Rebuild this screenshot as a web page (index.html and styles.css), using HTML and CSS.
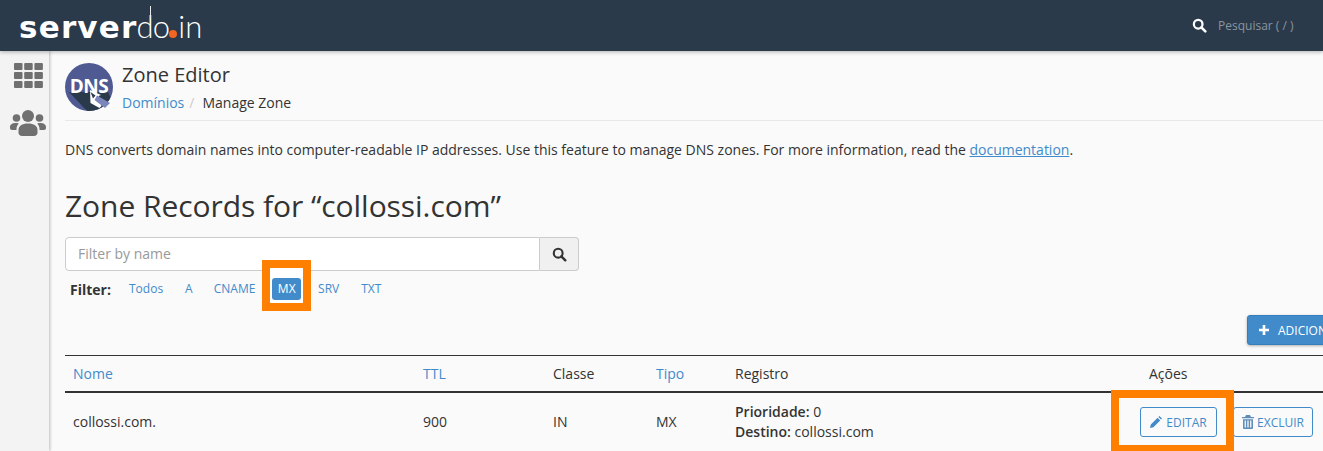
FILE: index.html
```html
<!DOCTYPE html>
<html lang="pt">
<head>
<meta charset="utf-8">
<title>Zone Editor</title>
<link rel="stylesheet" href="styles.css">
</head>
<body>
<header class="topbar">
  <div class="logo"><span class="logo-bold">server</span><span class="logo-thin"><span class="logo-d">do</span><i class="logo-dot"></i>in</span></div>
  <div class="search">
    <svg class="search-icon" viewBox="0 0 16 16"><circle cx="6.600" cy="6.600" r="4.600" fill="none" stroke="#fff" stroke-width="2.400"/><path d="M10 10l4.200 4.200" stroke="#fff" stroke-width="2.800" stroke-linecap="round"/></svg>
    <span>Pesquisar ( / )</span>
  </div>
</header>
<div class="shell">
  <aside class="sidebar">
    <svg class="side-grid" viewBox="0 0 29 25" fill="#707070">
      <rect x="0" y="0" width="8.500" height="7" rx="1"/><rect x="10.200" y="0" width="8.500" height="7" rx="1"/><rect x="20.400" y="0" width="8.500" height="7" rx="1"/>
      <rect x="0" y="9" width="8.500" height="7" rx="1"/><rect x="10.200" y="9" width="8.500" height="7" rx="1"/><rect x="20.400" y="9" width="8.500" height="7" rx="1"/>
      <rect x="0" y="18" width="8.500" height="7" rx="1"/><rect x="10.200" y="18" width="8.500" height="7" rx="1"/><rect x="20.400" y="18" width="8.500" height="7" rx="1"/>
    </svg>
    <svg class="side-users" viewBox="0 0 36 26" fill="#707070">
      <circle cx="18" cy="6" r="6"/><circle cx="6.500" cy="8" r="3.800"/><circle cx="29.500" cy="8" r="3.800"/>
      <path d="M8.500 22.500c0 2 1.500 3.500 3.500 3.500h12c2 0 3.500-1.500 3.500-3.500V20c0-4-3.500-6.500-9.500-6.500s-9.500 2.500-9.500 6.500z"/>
      <path d="M6.500 20H2c-1.200 0-2-.8-2-2v-1c0-2.500 2.500-4 6-4 1 0 2 .2 2.700.4C7.300 15 6.500 17 6.500 19z"/>
      <path d="M29.500 20H34c1.200 0 2-.8 2-2v-1c0-2.500-2.500-4-6-4-1 0-2 .2-2.700.4C28.700 15 29.500 17 29.500 19z"/>
    </svg>
  </aside>
  <main class="content">
    <div class="page-head">
      <svg class="dns-icon" viewBox="0 0 48 48">
        <defs><clipPath id="dc"><circle cx="24" cy="24" r="24"/></clipPath></defs>
        <circle cx="24" cy="24" r="24" fill="#4f5a93"/>
        <g clip-path="url(#dc)">
          <path d="M4 29H43l5 11-10 8H22z" fill="#2b3a4b"/>
        </g>
        <text x="24" y="29.500" class="dns-text">DNS</text>
        <path d="M25 27l11 5-2.500 1 3 10-2 2-9-5z" fill="#fff"/>
        <path d="M32 32.500l13 7.500-5 5-10.500-8z" fill="#7c86bd"/>
        <path d="M25.500 29l5 3.500-2.500 3z" fill="#2b3a4b"/>
      </svg>
      <div class="head-text">
        <h1>Zone Editor</h1>
        <nav class="crumbs"><a>Domínios</a><span class="sep">/</span><span class="cur">Manage Zone</span></nav>
      </div>
    </div>
    <p class="intro">DNS converts domain names into computer-readable IP addresses. Use this feature to manage DNS zones. For more information, read the <a>documentation</a>.</p>
    <h2>Zone Records for “collossi.com”</h2>
    <div class="search-group">
      <div class="filter-input">Filter by name</div>
      <button class="search-btn"><svg viewBox="0 0 16 16"><circle cx="6.600" cy="6.600" r="4.700" fill="none" stroke="#333" stroke-width="2.200"/><path d="M10 10l4.200 4.200" stroke="#333" stroke-width="2.600" stroke-linecap="round"/></svg></button>
    </div>
    <div class="filters">
      <strong>Filter:</strong>
      <a class="f f-todos">Todos</a><a class="f f-a">A</a><a class="f">CNAME</a><span class="active-wrap"><span class="mark mark-mx"></span><a class="f active">MX</a></span><a class="f f-srv">SRV</a><a class="f">TXT</a>
    </div>
    <div class="add-row"><button class="add-btn"><svg viewBox="0 0 12 12"><path d="M6 1v10M1 6h10" stroke="#fff" stroke-width="2.600"/></svg>ADICIONAR REGISTRO</button></div>
    <div class="table">
      <div class="row thead">
        <div class="c c-name"><a>Nome</a></div>
        <div class="c c-ttl"><a>TTL</a></div>
        <div class="c c-class">Classe</div>
        <div class="c c-type"><a>Tipo</a></div>
        <div class="c c-rec">Registro</div>
        <div class="c c-act-h">Ações</div>
      </div>
      <div class="row tbody">
        <div class="c c-name single">collossi.com.</div>
        <div class="c c-ttl single">900</div>
        <div class="c c-class single">IN</div>
        <div class="c c-type single">MX</div>
        <div class="c c-rec"><div><b>Prioridade:</b> 0</div><div><b>Destino:</b> collossi.com</div></div>
        <div class="c c-act">
          <button class="act edit"><svg viewBox="0 0 12 12"><path d="M0 12l.8-3.400L7.600 1.800l2.600 2.600-6.800 6.800zM8.400 1l1-1 2.600 2.600-1 1z" fill="#428bca"/></svg>EDITAR<span class="mark mark-edit"></span></button>
          <button class="act del"><svg class="trash" viewBox="0 0 12 14"><path d="M4 0h4l1 2h3v1.200H0V2h3zM1 4.200h10V13a1 1 0 0 1-1 1H2a1 1 0 0 1-1-1zm1.600 1.300v7h1.300v-7zm2.750 0v7h1.300v-7zm2.750 0v7h1.300v-7z" fill="#5f8db8" fill-rule="evenodd"/></svg>EXCLUIR</button>
        </div>
      </div>
    </div>
  </main>
</div>
</body>
</html>
```
FILE: styles.css
```css
* { box-sizing: border-box; }
html, body { margin: 0; padding: 0; height: 451px; overflow: hidden; }
body { font-family: "Open Sans", sans-serif; font-size: 14px; color: #333; background: #fafafa; }
a { color: #428bca; }
.topbar { height: 51px; background: #2b3a4b; display: flex; justify-content: space-between; position: relative; z-index: 2; box-shadow: 0 1px 4px rgba(0,0,0,.3); }
.logo { padding: 9px 0 0 19px; height: 51px; color: #fff; line-height: 34px; white-space: nowrap; display: flex; align-items: baseline; }
.logo-bold { font: 700 31px/34px "DejaVu Sans", sans-serif; letter-spacing: 1.200px; }
.logo-thin { font: 300 31px/34px "Lato", sans-serif; display: flex; align-items: baseline; margin-left: -1px; }
.logo-d { position: relative; letter-spacing: -.8px; }
.logo-d::after { content: ""; position: absolute; left: 13.500px; top: -3px; width: 1.200px; height: 12px; background: #e8eaec; }
.logo-dot { width: 8px; height: 8px; border-radius: 50%; background: #f26522; margin: 0 1px 0 0; align-self: baseline; }
.search { display: flex; align-items: center; color: #8a949e; font-size: 12px; width: 131px; gap: 11px; }
.search-icon { width: 15px; height: 15px; margin-bottom: 1px; }
.shell { display: flex; height: 400px; }
.sidebar { width: 49px; flex: none; background: #f3f3f3; box-shadow: 1px 0 3px rgba(0,0,0,.25); display: flex; flex-direction: column; align-items: center; padding-top: 12px; padding-left: 8px; }
.side-grid { width: 29px; height: 25px; }
.side-users { width: 36px; height: 26px; margin-top: 22px; margin-left: -1px; }
.content { flex: 1; min-width: 0; padding: 12px 0 0 16px; overflow: hidden; }
.page-head { display: flex; height: 58px; border-bottom: 1px solid #e8e8e8; gap: 9px; }
.dns-icon { width: 48px; height: 48px; flex: none; }
.dns-text { font: 700 19px "Open Sans", sans-serif; fill: #fff; text-anchor: middle; letter-spacing: -.5px; }
h1 { font-size: 20px; font-weight: 400; margin: -1px 0 0; line-height: 26px; color: #333; }
.crumbs { font-size: 14px; line-height: 20px; margin-top: 5px; }
.sep { color: #ccc; margin: 0 8px 0 5px; }
.intro { margin: 19px 0 0; line-height: 20px; font-size: 14px; white-space: nowrap; letter-spacing: -.007px; }
.intro a { text-decoration: underline; }
h2 { font-size: 30px; font-weight: 400; line-height: 40px; margin: 26px 0 0; color: #333; letter-spacing: -.06px; }
.search-group { display: flex; width: 514px; height: 34px; margin-top: 11px; }
.filter-input { flex: 1; border: 1px solid #ccc; border-radius: 4px 0 0 4px; background: #fff; color: #999; padding: 6px 12px; line-height: 20px; }
.search-btn { width: 39px; border: 1px solid #ccc; border-left: 0; border-radius: 0 4px 4px 0; background: #f0f0f0; padding: 0; display: flex; align-items: center; justify-content: center; }
.search-btn svg { width: 15px; height: 15px; }
.filters { display: flex; align-items: center; height: 24px; margin-top: 6px; padding-left: 5px; font-size: 12px; }
.filters strong { font-size: 14px; width: 52px; }
.f { display: block; padding: 0 7px; line-height: 22px; height: 22px; margin-right: 9px; border-radius: 3px; position: relative; }
.f-todos { margin-right: 8px; }
.f-a { margin-right: 7px; }
.f-srv { margin-right: 8px; }
.active-wrap { position: relative; display: block; margin: 0 10px 0 1px; }
.active { background: #428bca; color: #fff; margin: 0; padding: 0 5.500px; }
.mark { position: absolute; border: 8px solid #ff8000; pointer-events: none; }
.mark-mx { left: -10px; top: -18px; width: 49px; height: 51px; background: #fff; }
.add-row { display: flex; justify-content: flex-start; padding-left: 1182px; margin-top: 14px; height: 30px; overflow: visible; }
.add-btn { flex: none; height: 30px; width: 170px; background: #428bca; border: 1px solid #357ebd; border-radius: 3px; color: #fff; font: 12px "Open Sans", sans-serif; text-align: left; padding: 0 0 0 10px; display: flex; align-items: center; gap: 8px; box-shadow: 0 1px 3px rgba(0,0,0,.3); white-space: nowrap; }
.add-btn svg { width: 12px; height: 12px; }
.table { margin-top: 10px; width: 1258px; }
.row { display: flex; }
.thead { border-top: 1px solid #333; border-bottom: 2px solid #333; height: 38px; align-items: center; }
.tbody { height: 58px; align-items: center; }
.c { padding-left: 8px; flex: none; }
.single { padding-bottom: 2px; }
.c-name { width: 350px; }
.c-ttl { width: 130px; }
.c-class { width: 103px; }
.c-type { width: 79px; }
.c-rec { width: 413px; line-height: 20px; }
.c-rec b { font-weight: 600; }
.c-act-h { padding-left: 9px; }
.c-act { flex: 1; padding-left: 0; display: flex; gap: 16px; align-items: center; }
.act { height: 30px; background: transparent; border: 1px solid #428bca; border-radius: 3px; color: #428bca; font: 12px "Open Sans", sans-serif; padding: 0; display: flex; align-items: center; justify-content: center; gap: 4px; position: relative; }
.act svg { width: 12px; height: 12px; }
.act .trash { width: 12px; height: 14px; }
.edit { width: 77px; z-index: 1; }
.del { width: 80px; gap: 3px; }
.mark-edit { left: -30px; top: -18px; width: 123px; height: 63px; }
```
